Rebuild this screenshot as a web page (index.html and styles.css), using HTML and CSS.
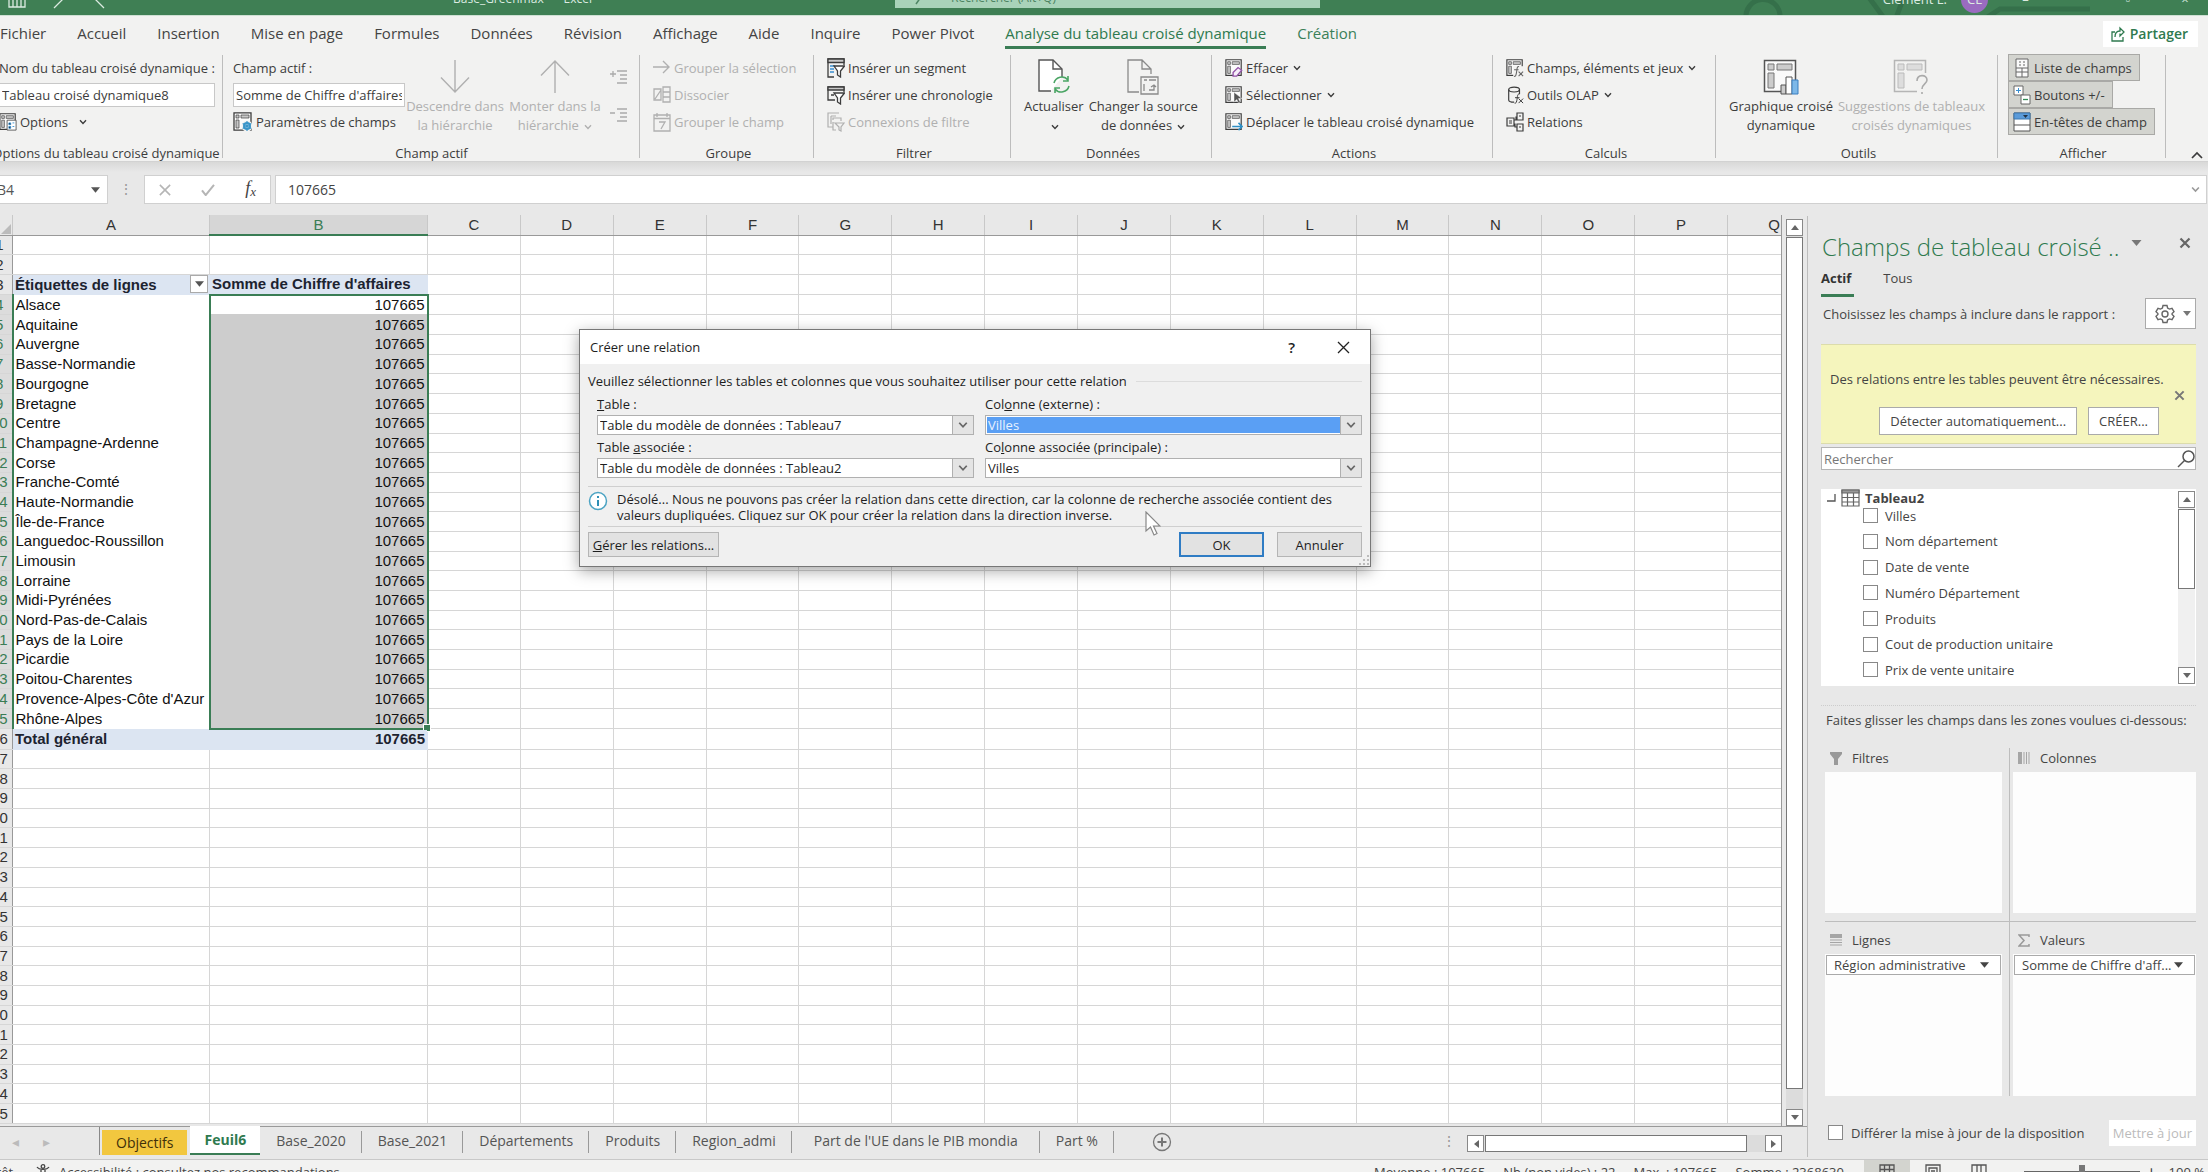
FILE: index.html
```html
<!DOCTYPE html>
<html lang="fr">
<head>
<meta charset="utf-8">
<title>Base_Greenmax - Excel</title>
<link rel="stylesheet" href="styles.css">
</head>
<body>
<svg class="defs" aria-hidden="true">
  <symbol id="chev" viewBox="0 0 8 6"><path d="M1 1.200 4 4.400 7 1.200" fill="none" stroke="currentColor" stroke-width="1.400"/></symbol>
  <symbol id="tri" viewBox="0 0 10 6"><path d="M0 0h10L5 6z" fill="currentColor"/></symbol>
  <symbol id="cross" viewBox="0 0 12 12"><path d="M1.500 1.500l9 9M10.500 1.500l-9 9" fill="none" stroke="currentColor" stroke-width="2.200"/></symbol>
  <symbol id="pivot" viewBox="0 0 20 20"><path d="M1 .8h17v17.400H1z" fill="#fafafa" stroke="currentColor" stroke-width="1.300"/><path d="M3 3h3v3H3zM8 3h8v3H8zM3 8h3v8H3z" fill="#c8c8c8" stroke="currentColor" stroke-width=".7"/></symbol>
</svg>
<div class="app">
  <header class="titlebar">
    <div class="quick">
      <svg width="18" height="18" viewBox="0 0 18 18" fill="none" stroke="currentColor" stroke-width="1.300"><path d="M1 1h13l3 3v13H1zM5 17V9h8v8M9 10v7"/></svg>
      <svg width="14" height="20" viewBox="0 0 14 20" fill="none" stroke="currentColor" stroke-width="1.300"><path d="M2 19 12 9V3"/></svg>
      <svg width="14" height="20" viewBox="0 0 14 20" fill="none" stroke="currentColor" stroke-width="1.300"><path d="M12 19 2 9V3"/></svg>
    </div>
    <div class="doc"><span>Base_Greenmax</span><span>-</span><span>Excel</span></div>
    <label class="topsearch">
      <svg width="14" height="18" viewBox="0 0 14 18" fill="none" stroke="currentColor" stroke-width="1.500"><circle cx="9" cy="5" r="4"/><path d="M6 8 1 15"/></svg>
      <input type="text" placeholder="Rechercher (Alt+Q)" aria-label="Rechercher (Alt+Q)">
    </label>
    <div class="account">
      <svg class="deco" width="360" height="32" viewBox="0 0 360 32" fill="none" stroke="#35704a" stroke-width="5"><path d="M10 32a17 17 0 0 1 34-3"/><path d="M126 2l22 30M172 0l-12 32M250 32l14-9h90"/></svg>
      <span>Clément L.</span><span class="avatar">CL</span>
      <button type="button" class="w-min" aria-label="Réduire">–</button><button type="button" class="w-max" aria-label="Agrandir">▫</button><button type="button" class="w-close" aria-label="Fermer">×</button>
    </div>
  </header>

  <nav class="tabs">
    <a href="#">Fichier</a><a href="#">Accueil</a><a href="#">Insertion</a><a href="#">Mise en page</a><a href="#">Formules</a><a href="#">Données</a><a href="#">Révision</a><a href="#">Affichage</a><a href="#">Aide</a><a href="#">Inquire</a><a href="#">Power Pivot</a><a href="#" class="on">Analyse du tableau croisé dynamique</a><a href="#" class="ctx">Création</a>
    <button type="button" class="share"><svg width="14" height="16" viewBox="0 0 14 16" fill="none" stroke="currentColor" stroke-width="1.300"><path d="M4 6H1v9h11v-4M4 11c0-4 2-6 5-6V2l4 4-4 4V7.500"/></svg>Partager</button>
  </nav>

  <section class="ribbon">
    <div class="grp">
      <div class="rows">
        <label class="txt" for="ptname">Nom du tableau croisé dynamique :</label>
        <input id="ptname" class="field" type="text" value="Tableau croisé dynamique8">
        <button type="button" class="cmd"><svg width="18" height="20" viewBox="0 0 20 20"><use href="#pivot"/><path d="M9 8h10v11H9z" fill="#fff" stroke="#555"/><path d="M11 11h2v2h-2zM11 15h2v2h-2zM15 11h2M15 15h2" stroke="#3a8fd0"/></svg>Options <svg class="cv gap" width="8" height="6"><use href="#chev"/></svg></button>
      </div>
      <div class="gt">Options du tableau croisé dynamique</div>
    </div>

    <div class="grp active-field">
      <div class="cols">
        <div class="rows">
          <label class="txt" for="actf">Champ actif :</label>
          <input id="actf" class="field" type="text" value="Somme de Chiffre d'affaires">
          <button type="button" class="cmd"><svg width="20" height="20" viewBox="0 0 20 20"><use href="#pivot"/><circle cx="14" cy="14" r="5.500" fill="#f2f2f1"/><circle cx="14" cy="14" r="3" fill="none" stroke="#3a95c9" stroke-width="2"/><path d="M14 9v10M9.700 11.500l8.600 5M9.700 16.500l8.600-5" stroke="#3a95c9" stroke-width="1.200"/></svg>Paramètres de champs</button>
        </div>
        <button type="button" class="big off w97"><svg width="32" height="36" viewBox="0 0 32 36" fill="none" stroke="currentColor" stroke-width="1.400"><path d="M16 1v32M2 18.500 16 33l14-14.500"/></svg><span>Descendre dans<br>la hiérarchie</span></button>
        <button type="button" class="big off w97"><svg width="32" height="36" viewBox="0 0 32 36" fill="none" stroke="currentColor" stroke-width="1.400"><path d="M16 34V2M2 16.500 16 2l14 14.500"/></svg><span>Monter dans la<br>hiérarchie <svg class="cv" width="8" height="6"><use href="#chev"/></svg></span></button>
        <div class="expand">
          <button type="button" aria-label="Développer le champ"><svg width="17" height="14" viewBox="0 0 17 14" fill="none" stroke="currentColor" stroke-width="1.300"><path d="M0 4h6M3 1v6M7 1h10M10 5h7M10 9h7M7 13h10"/></svg></button>
          <button type="button" aria-label="Réduire le champ"><svg width="17" height="14" viewBox="0 0 17 14" fill="none" stroke="currentColor" stroke-width="1.300"><path d="M0 5h5M7 1h10M10 5h7M10 9h7M7 13h10"/></svg></button>
        </div>
      </div>
      <div class="gt">Champ actif</div>
    </div>

    <div class="grp">
      <div class="rows">
        <button type="button" class="cmd off"><svg width="18" height="20" viewBox="0 0 18 20" fill="none" stroke="currentColor" stroke-width="1.400"><path d="M0 9h16M10 3l6 6-6 6"/></svg>Grouper la sélection</button>
        <button type="button" class="cmd off"><svg width="18" height="20" viewBox="0 0 18 20" fill="none" stroke="currentColor" stroke-width="1.300"><path d="M1 4h7v11H1zM2 14l6-9M10 2h7v15h-7zM10 7h7M10 12h7"/></svg>Dissocier</button>
        <button type="button" class="cmd off"><svg width="18" height="20" viewBox="0 0 18 20" fill="none" stroke="currentColor" stroke-width="1.300"><path d="M1 3h16v16H1zM1 6.500h16M4 1v4M14 1v4M6 10h6l-4 7"/></svg>Grouper le champ</button>
      </div>
      <div class="gt">Groupe</div>
    </div>

    <div class="grp">
      <div class="rows">
        <button type="button" class="cmd"><svg width="18" height="20" viewBox="0 0 18 20" fill="none" stroke="currentColor" stroke-width="1.300"><path d="M7 19H1V1h16v6"/><path d="M1 1h16v3.500H1z" fill="#c8c8c8"/><path d="M3 8h5M3 11h4M3 14h4" stroke="#3a8fd0"/><path d="M7 8h10.500l-4 5v6l-3-2v-4z" fill="#fff"/></svg>Insérer un segment</button>
        <button type="button" class="cmd"><svg width="18" height="20" viewBox="0 0 18 20" fill="none" stroke="currentColor" stroke-width="1.300"><path d="M8 15H1V2h16v5M4 10h3"/><path d="M1 2h16v3H1z" fill="#c8c8c8"/><path d="M7 8h10.500l-4 5v6l-3-2v-4z" fill="#fff"/></svg>Insérer une chronologie</button>
        <button type="button" class="cmd off"><svg width="18" height="20" viewBox="0 0 18 20" fill="none" stroke="currentColor" stroke-width="1.200"><path d="M6 15H1V1h11M4 4v8M4 4h5M6 8V6h8v3M6 10v8h3M8 11h9l-3 4v4l-2-1v-3z"/></svg>Connexions de filtre</button>
      </div>
      <div class="gt">Filtrer</div>
    </div>

    <div class="grp data-grp">
      <div class="cols">
        <button type="button" class="big"><svg width="34" height="36" viewBox="0 0 34 36" fill="none"><path d="M14 32H2V1h14l9 9v8" fill="#fff" stroke="#555" stroke-width="1.400"/><path d="M16 1v9h9" stroke="#555" stroke-width="1.400"/><path d="M17 24a8 8 0 0 1 14-3m0-4v5h-5M32 27a8 8 0 0 1-14 3m0 4v-5h5" stroke="#4aa564" stroke-width="1.600"/></svg><span>Actualiser<br><svg class="cv" width="8" height="6"><use href="#chev"/></svg></span></button>
        <button type="button" class="big"><svg width="34" height="36" viewBox="0 0 34 36" fill="none" stroke="#8a8a8a" stroke-width="1.300"><path d="M13 33H2V1h14l9 9v5M16 1v9h9M15 18h17v17H15zM18 21h3M23 21h7M18 25v7M23 31h5v-5m-3 2 3-2 2 2"/></svg><span>Changer la source<br>de données <svg class="cv" width="8" height="6"><use href="#chev"/></svg></span></button>
      </div>
      <div class="gt">Données</div>
    </div>

    <div class="grp">
      <div class="rows">
        <button type="button" class="cmd"><svg width="18" height="20" viewBox="0 0 20 20"><use href="#pivot"/><path d="M9 15 14.500 9.500l4 3L13 19H9z" fill="#f7effa" stroke="#9353a8" stroke-width="1.500"/></svg>Effacer <svg class="cv" width="8" height="6"><use href="#chev"/></svg></button>
        <button type="button" class="cmd"><svg width="18" height="20" viewBox="0 0 20 20"><use href="#pivot"/><path d="M10 7v11l3-3 2 4 2-1-2-4h4z" fill="#555" stroke="#fff" stroke-width=".5"/></svg>Sélectionner <svg class="cv" width="8" height="6"><use href="#chev"/></svg></button>
        <button type="button" class="cmd"><svg width="18" height="20" viewBox="0 0 20 20"><use href="#pivot"/><path d="M8 15h11M15 11l4 4-4 4" fill="none" stroke="#2f8fc5" stroke-width="1.700"/></svg>Déplacer le tableau croisé dynamique</button>
      </div>
      <div class="gt">Actions</div>
    </div>

    <div class="grp">
      <div class="rows">
        <button type="button" class="cmd"><svg width="18" height="20" viewBox="0 0 20 20"><use href="#pivot"/><path d="M8 8h12v12H8z" fill="#f2f2f1"/><path d="M14.500 8.500c-3-1-2 5-3.500 9.500-.5 1.500-1.500 1.500-2 1M9 12h5M14 14l5 5M19 14l-5 5" fill="none" stroke="#666" stroke-width="1.200"/></svg>Champs, éléments et jeux <svg class="cv" width="8" height="6"><use href="#chev"/></svg></button>
        <button type="button" class="cmd"><svg width="18" height="20" viewBox="0 0 20 20" fill="none" stroke="currentColor" stroke-width="1.300"><path d="M9 18c-4 0-6-1-6-2.500V4M15 4v5"/><ellipse cx="9" cy="4" rx="6" ry="2.700"/><path d="M15 9c-3-1-2 5-3.500 9-.5 1-1.500 1.500-2 1M10 13h5M14 14l5 5M19 14l-5 5" stroke-width="1.100"/></svg>Outils OLAP <svg class="cv" width="8" height="6"><use href="#chev"/></svg></button>
        <button type="button" class="cmd"><svg width="18" height="20" viewBox="0 0 18 20" fill="none" stroke="currentColor" stroke-width="1.200"><path d="M1 6h7v8H1zM3 9h3M3 11h3M11 1h6v7h-6zM13 4h2M11 12h6v7h-6zM13 15h2M8 8h2V5h1M8 12h1v3h2"/></svg>Relations</button>
      </div>
      <div class="gt">Calculs</div>
    </div>

    <div class="grp tools-grp">
      <div class="cols">
        <button type="button" class="big"><svg width="36" height="36" viewBox="0 0 36 36"><path d="M1.500 1.500h31v31h-31z" fill="#fafafa" stroke="#555" stroke-width="1.500"/><path d="M5 5h6v6H5zM14 5h15v6H14zM5 14h6v15H5z" fill="#ccc" stroke="#777"/><path d="M18 26h5v9h-5z" fill="#ccc" stroke="#555"/><path d="M23 18h6v17h-6z" fill="#fff" stroke="#555"/><path d="M29 21h6v14h-6z" fill="#7db8e8" stroke="#3a7fc0"/></svg><span>Graphique croisé<br>dynamique</span></button>
        <button type="button" class="big off"><svg width="36" height="36" viewBox="0 0 36 36"><path d="M24 32.500H1.500v-31h31V14" fill="none" stroke="#b5b5b5" stroke-width="1.500"/><path d="M5 5h6v6H5zM14 5h15v6H14zM5 14h6v15H5z" fill="#ddd" stroke="#bbb"/><path d="M24 22c0-7 10-7 10-1 0 4-5 4-5 9M29 33v2" fill="none" stroke="#aaa" stroke-width="1.600"/></svg><span>Suggestions de tableaux<br>croisés dynamiques</span></button>
      </div>
      <div class="gt">Outils</div>
    </div>

    <div class="grp show-grp">
      <div class="rows">
        <button type="button" class="cmd tog"><svg width="18" height="20" viewBox="0 0 18 20"><path d="M3 1h12v18H3z" fill="#fafafa" stroke="#666"/><path d="M6 4h2M10 4h2M6 7h2M10 7h2M3 10h12M3 14h12M9 10v9" stroke="#666"/></svg>Liste de champs</button>
        <button type="button" class="cmd tog"><svg width="18" height="20" viewBox="0 0 18 20"><path d="M1 1h9v9H1z" fill="#fff" stroke="#666"/><path d="M3 5.500h5M5.500 3v5" stroke="#3a8fd0"/><path d="M8 10h9v9H8z" fill="#fff" stroke="#666"/><path d="M10 14.500h5" stroke="#2f8a55" stroke-width="1.300"/></svg>Boutons +/-</button>
        <button type="button" class="cmd tog"><svg width="18" height="20" viewBox="0 0 18 20"><path d="M1 1h16v18H1z" fill="#fff" stroke="#555"/><path d="M1 1h16v6H1z" fill="#5b9bd9" stroke="#3d78b0"/><path d="M10 3h5l-2.500 3z" fill="#234"/><path d="M1 13h16" stroke="#555"/></svg>En-têtes de champ</button>
      </div>
      <div class="gt">Afficher</div>
    </div>
    <button type="button" class="collapse" aria-label="Réduire le ruban"><svg width="12" height="8" viewBox="0 0 12 8" fill="none" stroke="currentColor" stroke-width="1.700"><path d="M1 7l5-5 5 5"/></svg></button>
  </section>

  <div class="formula">
    <div class="namebox"><input type="text" value="B4" aria-label="Zone Nom"><svg width="9" height="6"><use href="#tri"/></svg></div>
    <span class="dots">⋮</span>
    <div class="fx">
      <svg width="12" height="12" viewBox="0 0 14 14" fill="none" stroke="#b5b5b5" stroke-width="1.800"><path d="M1 1l12 12M13 1 1 13"/></svg>
      <svg width="14" height="12" viewBox="0 0 15 13" fill="none" stroke="#b5b5b5" stroke-width="2.200"><path d="M1 7l4 5L14 1"/></svg>
      <i>f<sub>x</sub></i>
    </div>
    <div class="fbar"><input type="text" value="107665" aria-label="Barre de formule"><svg width="9" height="7"><use href="#chev"/></svg></div>
  </div>

  <main class="work">
    <section class="sheet">
      <div class="gridrow">
        <div class="gridwrap">
          <table class="grid" id="grid">
            <colgroup><col class="c-num"><col class="c-a"><col class="c-b"></colgroup>
            <thead><tr id="heads"></tr></thead>
            <tbody id="cells"></tbody>
          </table>
        </div>
        <div class="vscroll">
          <button type="button" aria-label="Monter"><svg class="up" width="8" height="5"><use href="#tri"/></svg></button>
          <span class="thumb"></span><span class="track"></span>
          <button type="button" aria-label="Descendre"><svg width="8" height="5"><use href="#tri"/></svg></button>
        </div>
      </div>
      <div class="bottom">
        <div class="nav"><span>◂</span><span>▸</span></div>
        <div class="sheets">
          <button type="button" class="gold">Objectifs</button><button type="button" class="cur">Feuil6</button><button type="button">Base_2020</button><button type="button">Base_2021</button><button type="button">Départements</button><button type="button">Produits</button><button type="button">Region_admi</button><button type="button" class="wide">Part de l'UE dans le PIB mondia</button><button type="button">Part %</button>
        </div>
        <button type="button" class="plus" aria-label="Nouvelle feuille"><svg width="20" height="20" viewBox="0 0 20 20" fill="none" stroke="#777"><circle cx="10" cy="10" r="8.500" stroke-width="1.300"/><path d="M10 5.500v9M5.500 10h9" stroke-width="2"/></svg></button>
        <span class="dots">⋮</span>
        <div class="hscroll">
          <button type="button" aria-label="Gauche"><svg width="6" height="8" viewBox="0 0 6 8"><path d="M6 0v8L1 4z" fill="#666"/></svg></button>
          <span class="thumb"></span><span class="track"></span>
          <button type="button" aria-label="Droite"><svg width="6" height="8" viewBox="0 0 6 8"><path d="M0 0v8l5-4z" fill="#666"/></svg></button>
        </div>
      </div>
    </section>

    <aside class="pane">
      <div class="phead"><h2>Champs de tableau croisé ..</h2><svg class="pt" width="11" height="6"><use href="#tri"/></svg><button type="button" class="x" aria-label="Fermer le volet"><svg width="12" height="12"><use href="#cross"/></svg></button></div>
      <div class="ptabs"><a href="#" class="on">Actif</a><a href="#">Tous</a></div>
      <div class="choose"><span>Choisissez les champs à inclure dans le rapport :</span>
        <button type="button" class="gear" aria-label="Outils"><svg width="20" height="20" viewBox="0 0 20 20" fill="none" stroke="#666" stroke-width="1.400"><path d="M8 1.500h4l.6 2.500 1.900 1.100 2.500-.8 2 3.400-1.900 1.800v1l1.900 1.800-2 3.400-2.500-.8-1.900 1.100-.6 2.500H8L7.400 16l-1.900-1.100-2.500.8-2-3.400 1.900-1.800v-1L1 7.700l2-3.400 2.500.8L7.400 4z"/><circle cx="10" cy="10" r="3"/></svg><svg width="8" height="5"><use href="#tri"/></svg></button></div>
      <div class="warn">
        <div class="wtext">Des relations entre les tables peuvent être nécessaires.</div>
        <div class="wbtn"><button type="button">Détecter automatiquement...</button><button type="button">CRÉER...</button></div>
        <button type="button" class="x" aria-label="Ignorer"><svg width="11" height="11"><use href="#cross"/></svg></button>
      </div>
      <label class="psearch"><input type="text" placeholder="Rechercher" aria-label="Rechercher"><svg width="18" height="18" viewBox="0 0 18 18" fill="none" stroke="#555" stroke-width="1.500"><circle cx="11.500" cy="6.500" r="5.500"/><path d="M7.500 10.500 1 17"/></svg></label>
      <div class="flist">
        <div class="ftree">
          <div class="tname"><svg width="9" height="8" viewBox="0 0 9 8"><path d="M8 0v7H0" fill="none" stroke="#555" stroke-width="1.300"/></svg><svg width="19" height="18" viewBox="0 0 19 18" fill="#fff" stroke="#666" stroke-width="1.200"><path d="M1 1h17v16H1z"/><path d="M1 1h17v3H1z" fill="#999"/><path d="M1 8.500h17M1 13h17M6.500 4v13M12.500 4v13"/></svg>Tableau2</div>
          <label><input type="checkbox">Villes</label>
          <label><input type="checkbox">Nom département</label>
          <label><input type="checkbox">Date de vente</label>
          <label><input type="checkbox">Numéro Département</label>
          <label><input type="checkbox">Produits</label>
          <label><input type="checkbox">Cout de production unitaire</label>
          <label><input type="checkbox">Prix de vente unitaire</label>
        </div>
        <div class="vscroll small">
          <button type="button" aria-label="Monter"><svg class="up" width="8" height="5"><use href="#tri"/></svg></button>
          <span class="thumb"></span><span class="track"></span>
          <button type="button" aria-label="Descendre"><svg width="8" height="5"><use href="#tri"/></svg></button>
        </div>
      </div>
      <div class="drag">Faites glisser les champs dans les zones voulues ci-dessous:</div>
      <div class="zones">
        <div class="zone"><h3><svg width="12" height="13" viewBox="0 0 12 13"><path d="M0 0h12v2L8 7v6H4V7L0 2z" fill="#999"/></svg>Filtres</h3><div class="drop"></div></div>
        <div class="zone"><h3><svg width="12" height="12" viewBox="0 0 12 12" stroke="#a5a5a5"><path d="M2 0v12" stroke-width="4"/><path d="M6 0v12M8.500 0v12M11 0v12" stroke-width="1"/></svg>Colonnes</h3><div class="drop"></div></div>
        <div class="zone"><h3><svg width="12" height="12" viewBox="0 0 12 12" stroke="#a5a5a5"><path d="M0 2h12" stroke-width="4"/><path d="M0 6h12M0 8.500h12M0 11h12" stroke-width="1"/></svg>Lignes</h3><div class="drop"><button type="button" class="chip">Région administrative<svg width="9" height="6"><use href="#tri"/></svg></button></div></div>
        <div class="zone"><h3><svg width="12" height="13" viewBox="0 0 12 13" fill="none" stroke="#999" stroke-width="1.500"><path d="M11 3V1H1l5 5.500L1 12h10v-2"/></svg>Valeurs</h3><div class="drop"><button type="button" class="chip">Somme de Chiffre d'aff...<svg width="9" height="6"><use href="#tri"/></svg></button></div></div>
      </div>
      <div class="defer"><label><input type="checkbox">Différer la mise à jour de la disposition</label><button type="button" disabled>Mettre à jour</button></div>
    </aside>
  </main>

  <footer class="status">
    <span class="ready">Prêt</span>
    <span class="acc"><svg width="16" height="16" viewBox="0 0 16 16" fill="none" stroke="currentColor" stroke-width="1.300"><circle cx="7" cy="2.500" r="1.800"/><path d="M1 3c2 3 10 3 12 0M5 6v4l-2 5M9 6v3M9 11l5 4M14 11l-5 4"/></svg>Accessibilité : consultez nos recommandations</span>
    <span class="stats"><span>Moyenne : 107665</span><span>Nb (non vides) : 22</span><span>Max. : 107665</span><span>Somme : 2368630</span></span>
    <span class="views">
      <button type="button" class="on" aria-label="Normal"><svg width="16" height="16" viewBox="0 0 16 16" fill="none" stroke="#555" stroke-width="1.300"><path d="M1 1h14v14H1zM1 5.500h14M1 10.500h14M5.500 1v14M10.500 1v14"/></svg></button>
      <button type="button" aria-label="Mise en page"><svg width="16" height="16" viewBox="0 0 16 16" fill="none" stroke="#555" stroke-width="1.300"><path d="M1 1h14v14H1zM4 4h8v11H4zM6 7h4M6 9.500h4M6 12h4"/></svg></button>
      <button type="button" aria-label="Sauts de page"><svg width="16" height="16" viewBox="0 0 16 16" fill="none" stroke="#555" stroke-width="1.300"><path d="M1 15V1h14v14M6 1v10H1M10 1v10h5"/></svg></button>
    </span>
    <span class="zoom"><span>−</span><input type="range" min="0" max="200" value="100" aria-label="Zoom"><span>+</span></span>
    <span class="pct">100 %</span>
  </footer>
</div>

<form class="dialog" role="dialog" aria-labelledby="dlgt">
  <div class="dtitle"><span id="dlgt">Créer une relation</span><button type="button" class="help">?</button><button type="button" aria-label="Fermer"><svg width="13" height="13" viewBox="0 0 13 13" stroke="#222" stroke-width="1.300"><path d="M1 1l11 11M12 1 1 12"/></svg></button></div>
  <div class="dbody">
    <p class="legend">Veuillez sélectionner les tables et colonnes que vous souhaitez utiliser pour cette relation</p>
    <div class="pairs">
      <div><label for="t1"><u>T</u>able :</label><span class="sel"><select id="t1"><option>Table du modèle de données : Tableau7</option></select><svg width="10" height="8"><use href="#chev"/></svg></span></div>
      <div><label for="c1">Col<u>o</u>nne (externe) :</label><span class="sel hot"><select id="c1"><option>Villes</option></select><svg width="10" height="8"><use href="#chev"/></svg></span></div>
      <div><label for="t2">Table <u>a</u>ssociée :</label><span class="sel"><select id="t2"><option>Table du modèle de données : Tableau2</option></select><svg width="10" height="8"><use href="#chev"/></svg></span></div>
      <div><label for="c2">Co<u>l</u>onne associée (principale) :</label><span class="sel"><select id="c2"><option>Villes</option></select><svg width="10" height="8"><use href="#chev"/></svg></span></div>
    </div>
    <div class="info"><svg width="20" height="20" viewBox="0 0 20 20"><circle cx="10" cy="10" r="8.500" fill="#fff" stroke="#4ba3c3" stroke-width="1.500"/><path d="M10 9v6M10 5v2" stroke="#2f8fb5" stroke-width="2"/></svg>
      <p>Désolé... Nous ne pouvons pas créer la relation dans cette direction, car la colonne de recherche associée contient des valeurs dupliquées. Cliquez sur OK pour créer la relation dans la direction inverse.</p></div>
    <div class="dbtn"><button type="button" class="manage"><u>G</u>érer les relations...</button><button type="button" class="ok">OK</button><button type="button">Annuler</button></div>
  </div>
  <svg class="grip" width="10" height="10" viewBox="0 0 10 10" fill="#bbb"><path d="M8 0h2v2H8zM4 4h2v2H4zM8 4h2v2H8zM0 8h2v2H0zM4 8h2v2H4zM8 8h2v2H8z"/></svg>
  <svg class="pointer" width="16" height="25" viewBox="0 0 16 25"><path d="M1 1v19l4.500-4 3.500 8 3-1.500L8.500 15H15z" fill="#fff" stroke="#888" stroke-width="1.200"/></svg>
</form>
<script src="grid.js"></script>
</body>
</html>
```
FILE: styles.css
```css
* { box-sizing: border-box; }
body {
  margin: 0;
  height: 100vh;
  overflow: hidden;
  position: relative;
  background: #e8e8e8;
  font: 13px/18px "Open Sans", "Noto Sans", sans-serif;
  color: #444;
}
button, input, select { font: inherit; color: inherit; margin: 0; padding: 0; border: 0; background: none; border-radius: 0; }
button { text-align: left; white-space: nowrap; }
a { color: inherit; text-decoration: none; }
h2, h3, p { margin: 0; font-weight: 400; }
svg { flex: none; }
.defs { position: absolute; width: 0; height: 0; }

/* The window sits partly beyond the top and left screen edges */
.app {
  margin: -17px 0 0 -14px;
  height: calc(100vh + 28px);
  display: flex;
  flex-direction: column;
}

.titlebar {
  height: 32px;
  flex: none;
  background: #3f7f54;
  color: #dcebe1;
  font-size: 12px;
  display: grid;
  grid-template-columns: 467fr 442fr 425fr 888fr;
  align-items: center;
  overflow: hidden;
}
.quick { display: flex; gap: 26px; padding-left: 22px; align-items: center; }
.doc { display: flex; gap: 8px; }
.topsearch { align-self: start; height: 25px; background: #a9d3b9; color: #4d8463; display: flex; align-items: center; gap: 22px; padding: 5px 0 0 20px; }
.topsearch input { flex: 1; min-width: 0; }
.topsearch input::placeholder { color: #4d8463; opacity: 1; }
.account { display: flex; align-items: center; justify-content: flex-end; gap: 14px; position: relative; font-size: 13px; }
.account button { text-align: center; }
.w-min { width: 47px; margin-right: 45px; }
.w-max { width: 40px; }
.w-close { width: 46px; }
.avatar { width: 27px; height: 27px; border-radius: 50%; background: #9a6bc0; text-align: center; line-height: 26px; }
.account > :not(.deco) { position: relative; }
.deco { position: absolute; left: 316px; top: 0; width: 560px; }

.tabs { display: flex; gap: 31px; height: 38px; flex: none; padding: 0 10px 2px 14px; background: #f2f2f1; font-size: 15px; align-items: center; border-top: 1px solid #cfe0d4; }
.tabs a { line-height: 20px; padding: 5px 0 3px; border-bottom: 3px solid transparent; white-space: nowrap; }
.tabs .on { color: #2f7a4f; font-weight: 500; border-color: #3a7d55; }
.tabs .ctx { color: #3a8058; }
.share { margin-left: auto; background: #fff; color: #2f7a4f; height: 26px; padding: 0 10px 0 8px; display: flex; align-items: center; gap: 5px; font-size: 14px; font-weight: 600; }

.ribbon {
  flex: none;
  height: 109px;
  background: #f2f2f1;
  border-bottom: 1px solid #d2d2d2;
  display: grid;
  grid-template-columns: 237fr 417fr 174fr 197fr 201fr 281fr 223fr 282fr 168fr 42fr;
  color: #3c3c3c;
}
.grp { position: relative; display: flex; flex-direction: column; padding: 1px 10px 0 13px; min-width: 0; }
.grp::after { content: ""; position: absolute; right: 0; top: 2px; bottom: 5px; width: 1px; background: #bdbdbd; }
.gt { display: flex; justify-content: center; padding-top: 9px; white-space: nowrap; }
.rows { display: grid; grid-template-rows: repeat(3, 27px); align-items: center; justify-items: start; }
.cols { display: flex; }
.txt { white-space: nowrap; }
.field { height: 24px; width: 100%; background: #fff; border: 1px solid #c8c8c8; padding: 0 2px; }
.cmd { display: flex; align-items: center; gap: 3px; }
.cv { margin-left: 2px; vertical-align: middle; }
.cv.gap { margin-left: 8px; }
.off { color: #b0b0b0; }
.big { display: flex; flex-direction: column; align-items: center; text-align: center; gap: 2px; padding-top: 5px; line-height: 19px; }
.w97 { width: 100px; }
.active-field { padding: 1px 10px; }
.active-field .rows { width: 172px; }
.expand { display: flex; flex-direction: column; gap: 20px; padding: 14px 0 0 5px; color: #aaa; }
.expand button { height: 18px; line-height: 0; }
.data-grp .cols { gap: 5px; }
.tools-grp .cols { gap: 5px; }
.show-grp { padding: 1px 8px 0 10px; }
.tog { background: #d3d4cf; border: 1px solid #a9a9a6; height: 27px; padding: 0 7px 0 4px; }
.collapse { align-self: end; justify-self: end; margin: 0 5px 4px 0; line-height: 8px; }

.formula { flex: none; display: flex; padding: 13px 1px 0 0; height: 42px; background: linear-gradient(#d9d9d8, #e8e8e8 10px); font-size: 14px; }
.formula input { flex: 1; min-width: 0; }
.namebox { width: 122px; background: #fff; border: 1px solid #d0d0d0; display: flex; align-items: center; padding: 0 7px 0 10px; color: #555; }
.dots { width: 36px; text-align: center; color: #999; line-height: 28px; }
.fx { width: 127px; background: #fff; border: 1px solid #d0d0d0; display: flex; align-items: center; justify-content: space-between; padding: 0 14px; margin-right: 4px; }
.fx i { font: italic 18px/20px "Liberation Serif", serif; color: #444; }
.fx sub { font-size: 13px; vertical-align: -2px; }
.fbar { flex: 1; background: #fff; border: 1px solid #d0d0d0; display: flex; align-items: center; padding: 0 6px 0 12px; }
.fbar svg { color: #999; }

.work { flex: 1; min-height: 0; display: grid; grid-template-columns: minmax(0, 1fr) 401px; }
.sheet { display: flex; flex-direction: column; min-height: 0; padding-top: 11px; }
.gridrow { flex: 1; min-height: 0; display: flex; gap: 4px; padding-right: 4px; border-bottom: 1px solid #9a9a9a; }
.gridwrap { flex: 1; min-width: 0; overflow: hidden; border-right: 1px solid #999; padding-bottom: 2px; }
.grid { width: calc(100% + 40px); height: 100%; table-layout: fixed; border-collapse: collapse; background: #fff; font: 15px/16px "Liberation Sans", Arial, sans-serif; color: #111; }
.c-num { width: 26px; }
.c-a { width: 197px; }
.c-b { width: 218px; }
.grid th, .grid td { padding: 0 2px 0 2px; border: 1px solid #d6d6d6; white-space: nowrap; overflow: visible; }
.grid th { font-weight: 400; background: #e8e8e8; text-align: center; color: #333; padding: 0; }
.grid thead th { height: 20px; border-top: 0; border-color: #c8c8c8; border-bottom: 1px solid #999; }
.grid tbody th { border-right-color: #999; }
.grid thead .pick { background: #d6d6d6; color: #3a7d55; border-bottom: 2px solid #3a7d55; }
.grid tbody .pick { background: #dcdcdc; color: #3a7d55; border-right: 2px solid #3a7d55; }
.grid .corner { text-align: right; line-height: 0; vertical-align: bottom; }
.grid .lbl { border-top-color: #fff; border-bottom-color: #fff; }
.grid .pv { background: #dce5f2; font-weight: 700; border-color: #dce5f2; position: relative; color: #1c2330; }
.grid .val { text-align: right; background: #cdcdcd; border-color: #cdcdcd; border-left: 2px solid #3a7d55; border-right: 2px solid #3a7d55; }
.grid .first { background: #fff; border-top: 2px solid #3a7d55; }
.grid .last { border-bottom: 2px solid #3a7d55; position: relative; }
.grid .last::after { content: ""; position: absolute; right: -4px; bottom: -4px; width: 6px; height: 6px; background: #3a7d55; border: 1px solid #fff; }
.grid .num { text-align: right; }
.filter { position: absolute; right: 1px; top: 0; width: 18px; height: 18px; background: #fff; border: 1px solid #aaa; color: #555; display: grid; place-items: center; }

.vscroll { width: 17px; display: flex; flex-direction: column; background: #dcdcdc; color: #666; margin-top: 4px; }
.vscroll button { height: 17px; background: #fff; border: 1px solid #888; display: grid; place-items: center; }
.vscroll .thumb { flex: 852; background: #fff; border: 1px solid #777; margin-top: 1px; }
.vscroll .track { flex: 20; }
.up { transform: rotate(180deg); }

.bottom { flex: none; height: 32px; display: flex; padding-right: 25px; font-size: 14px; color: #555; }
.nav { width: 114px; display: flex; gap: 24px; padding-left: 26px; line-height: 30px; color: #bbb; border-right: 1px solid #888; margin-bottom: 4px; }
.sheets { display: flex; height: 28px; margin-bottom: 4px; }
.sheets button { padding: 0 16px; position: relative; }
.sheets button::after { content: ""; position: absolute; right: 0; top: 4px; bottom: 2px; width: 1px; background: #999; }
.sheets .gold { background: #f2c73f; color: #40300a; margin: 3px 3px 0 2px; padding: 0 14px; line-height: 24px; }
.sheets .cur { background: #fff; color: #2f7a4f; font-weight: 700; border-bottom: 2px solid #3a7d55; margin-top: -1px; padding: 0 14px; }
.sheets .gold::after, .sheets .cur::after { display: none; }
.sheets .wide { padding: 0 22px; }
.plus { margin: 5px 0 0 38px; height: 20px; line-height: 0; }
.bottom .dots { margin-left: auto; }
.hscroll { flex: 0 0 315px; height: 17px; margin-top: 8px; display: flex; background: #dcdcdc; }
.hscroll button { width: 17px; background: #fff; border: 1px solid #888; display: grid; place-items: center; }
.hscroll .thumb { flex: 262; background: #fff; border: 1px solid #777; margin-left: 1px; }
.hscroll .track { flex: 18; }

.pane { border-left: 1px solid #bdbdbd; margin: 12px 0 2px; padding: 0 12px 0 13px; display: flex; flex-direction: column; min-height: 0; }
.phead { display: flex; align-items: center; height: 46px; padding: 16px 0 0 1px; color: #777; }
.phead h2 { font-size: 24px; line-height: 30px; font-weight: 300; color: #2f7a4f; flex: 1; white-space: nowrap; }
.pt { margin: -8px 37px 0 0; }
.phead .x { margin: -8px 5px 0 0; color: #666; line-height: 0; }
.ptabs { display: flex; gap: 29px; margin-top: 7px; }
.ptabs a { padding: 0 3px 7px 0; border-bottom: 3px solid transparent; }
.ptabs .on { font-weight: 700; color: #333; border-color: #3a7d55; }
.choose { display: flex; align-items: center; justify-content: space-between; padding-left: 2px; margin-top: 1px; height: 31px; white-space: nowrap; }
.gear { width: 51px; height: 31px; background: #fff; border: 1px solid #aaa; display: flex; align-items: center; justify-content: center; gap: 8px; padding-left: 5px; color: #777; }
.warn { margin-top: 15px; height: 100px; background: #f5f5bd; border: 1px solid #dcdcab; border-width: 1px 0; display: grid; grid-template-columns: 1fr auto; grid-template-rows: 63px 27px; align-items: end; padding: 0 11px 0 9px; }
.warn .x { grid-column: 2; grid-row: 1 / 3; align-self: center; line-height: 0; padding-top: 10px; color: #777; }
.wtext { height: 38px; white-space: nowrap; }
.wbtn { display: flex; gap: 11px; justify-content: flex-end; margin-right: 15px; grid-row: 2; grid-column: 1; }
.wbtn button { height: 28px; background: #fff; border: 1px solid #aaa; padding: 0 10px; }
.psearch { display: flex; height: 23px; margin-top: 3px; background: #fff; border: 1px solid #b5b5b5; padding: 1px 0 1px 2px; align-items: center; }
.psearch input { flex: 1; min-width: 0; }
.psearch input::placeholder { color: #777; opacity: 1; }
.flist { margin-top: 19px; height: 197px; background: #fff; display: flex; justify-content: space-between; padding-right: 1px; flex: none; }
.ftree { display: flex; flex-direction: column; justify-content: space-between; height: 190px; }
.tname { display: flex; align-items: center; gap: 5px; font-weight: 700; padding-left: 6px; margin-bottom: -8px; }
.ftree label { display: flex; align-items: center; gap: 7px; padding-left: 42px; }
.pane input[type=checkbox] { appearance: none; width: 15px; height: 15px; border: 1px solid #888; background: #fff; }
.vscroll.small { background: #f0f0f0; margin: 2px 0; }
.small .thumb { flex: 78; }
.small .track { flex: 79; }
.drag { margin-top: 19px; padding: 5px 0 0 5px; border-top: 1px dotted #ccc; white-space: nowrap; }
.zones { flex: 1; min-height: 0; margin: 19px 0 0 4px; display: grid; grid-template-columns: 185px minmax(0, 1fr); grid-template-rows: 1fr 1fr; }
.zone { display: flex; flex-direction: column; min-height: 0; }
.zone:nth-child(odd) { padding-right: 7px; border-right: 1px solid #bdbdbd; }
.zone:nth-child(even) { padding-left: 3px; }
.zone:nth-child(-n+2) { padding-bottom: 8px; border-bottom: 1px solid #bdbdbd; }
.zone:nth-child(n+3) { padding-top: 8px; }
.zone h3 { font-size: 13px; line-height: 18px; height: 24px; display: flex; align-items: center; gap: 10px; padding: 0 0 4px 5px; }
.drop { flex: 1; background: #fdfdfd; padding: 1px; }
.chip { display: flex; align-items: center; justify-content: space-between; width: 100%; height: 20px; background: #fff; border: 1px solid #aaa; padding: 0 11px 0 7px; }
.defer { display: flex; justify-content: space-between; align-items: center; height: 61px; padding: 12px 0 0 7px; white-space: nowrap; }
.defer label { display: flex; align-items: center; gap: 8px; }
.defer button { background: #fff; color: #bbb; height: 26px; padding: 0 4px; }

.status { flex: none; height: 24px; background: #f2f2f1; border-top: 1px solid #c8c8c8; display: flex; align-items: center; }
.ready { padding-left: 2px; width: 50px; }
.acc { display: flex; align-items: center; gap: 7px; }
.stats { margin-left: auto; display: flex; gap: 18px; }
.views { display: flex; margin-left: 20px; align-self: stretch; }
.views button { width: 46px; display: grid; place-items: center; }
.views .on { background: #d3d4cf; }
.zoom { display: flex; align-items: center; gap: 6px; font-size: 18px; margin-left: 6px; }
.zoom input { appearance: none; width: 116px; height: 2px; background: #666; }
.zoom input::-webkit-slider-thumb { appearance: none; width: 6px; height: 14px; background: #777; }
.pct { margin: 0 3px 0 12px; }

.dialog { position: absolute; left: 579px; top: 329px; width: 792px; background: #f0f0f0; border: 1px solid #777; box-shadow: 0 4px 14px rgba(0, 0, 0, .35); color: #1e1e1e; }
.dtitle { background: #fff; height: 34px; display: flex; align-items: center; padding: 0 20px 0 10px; }
.dtitle span { flex: 1; }
.dtitle .help { margin-right: 42px; font-size: 15px; font-weight: 600; }
.dtitle button { line-height: 0; }
.dbody { padding: 8px 8px 9px; }
.legend { display: flex; align-items: center; gap: 9px; white-space: nowrap; }
.legend::after { content: ""; flex: 1; height: 1px; background: #dcdcdc; }
.pairs { display: grid; grid-template-columns: 377fr 377fr; column-gap: 11px; row-gap: 3px; padding: 5px 0 8px 9px; }
.pairs label { display: block; line-height: 18px; margin-bottom: 2px; }
.sel { position: relative; display: block; height: 20px; }
.sel select { appearance: none; width: 100%; height: 20px; border: 1px solid #b0b0b0; background: #fff; padding: 0 2px; display: block; }
.sel svg { position: absolute; right: 0; top: 0; width: 22px; height: 20px; padding: 5px; background: #e4e4e4; border: 1px solid #b0b0b0; color: #666; }
.hot select { background: #5a9ff4; color: #e8f2ff; box-shadow: inset 0 0 0 1px #fff; }
.info { display: flex; gap: 9px; border: 1px solid #cfcfcf; border-width: 1px 0; padding: 4px 0 3px; }
.info p { line-height: 16px; }
.dbtn { display: flex; gap: 13px; padding-top: 5px; }
.dbtn button { height: 25px; width: 85px; text-align: center; background: #e2e2e2; border: 1px solid #b5b5b5; }
.dbtn .manage { width: 131px; margin-right: auto; }
.dbtn .ok { border: 2px solid #2f7cc4; }
.grip { position: absolute; right: 1px; bottom: 1px; }
.pointer { position: absolute; left: 565px; top: 181px; }
```
FILE: grid.js
```js
const regions = ["Alsace", "Aquitaine", "Auvergne", "Basse-Normandie", "Bourgogne", "Bretagne", "Centre",
  "Champagne-Ardenne", "Corse", "Franche-Comté", "Haute-Normandie", "Île-de-France", "Languedoc-Roussillon",
  "Limousin", "Lorraine", "Midi-Pyrénées", "Nord-Pas-de-Calais", "Pays de la Loire", "Picardie",
  "Poitou-Charentes", "Provence-Alpes-Côte d'Azur", "Rhône-Alpes"];
const value = "107665";
const columns = "ABCDEFGHIJKLMNOPQ".split("");

const triangle = '<svg width="11" height="11" viewBox="0 0 11 11"><path d="M10 0v10H0z" fill="#bbb"/></svg>';
document.getElementById("heads").innerHTML =
  `<th class="corner">${triangle}</th>` +
  columns.map(c => `<th scope="col"${c === "B" ? ' class="pick"' : ""}>${c}</th>`).join("");

const filter = '<button type="button" class="filter" aria-label="Filtrer"><svg width="9" height="6"><use href="#tri"/></svg></button>';
const blanks = n => "<td></td>".repeat(n);
let html = "";
for (let r = 1; r <= 45; r++) {
  const picked = r >= 4 && r <= 25;
  html += `<tr><th scope="row"${picked ? ' class="pick"' : ""}>${r}</th>`;
  if (r === 3) {
    html += `<td class="pv">Étiquettes de lignes${filter}</td><td class="pv">Somme de Chiffre d'affaires</td>` + blanks(15);
  } else if (picked) {
    const edge = r === 4 ? " first" : r === 25 ? " last" : "";
    html += `<td class="lbl">${regions[r - 4]}</td><td class="val${edge}">${value}</td>` + blanks(15);
  } else if (r === 26) {
    html += `<td class="pv">Total général</td><td class="pv num">${value}</td>` + blanks(15);
  } else {
    html += blanks(17);
  }
  html += "</tr>";
}
document.getElementById("cells").innerHTML = html;
```
